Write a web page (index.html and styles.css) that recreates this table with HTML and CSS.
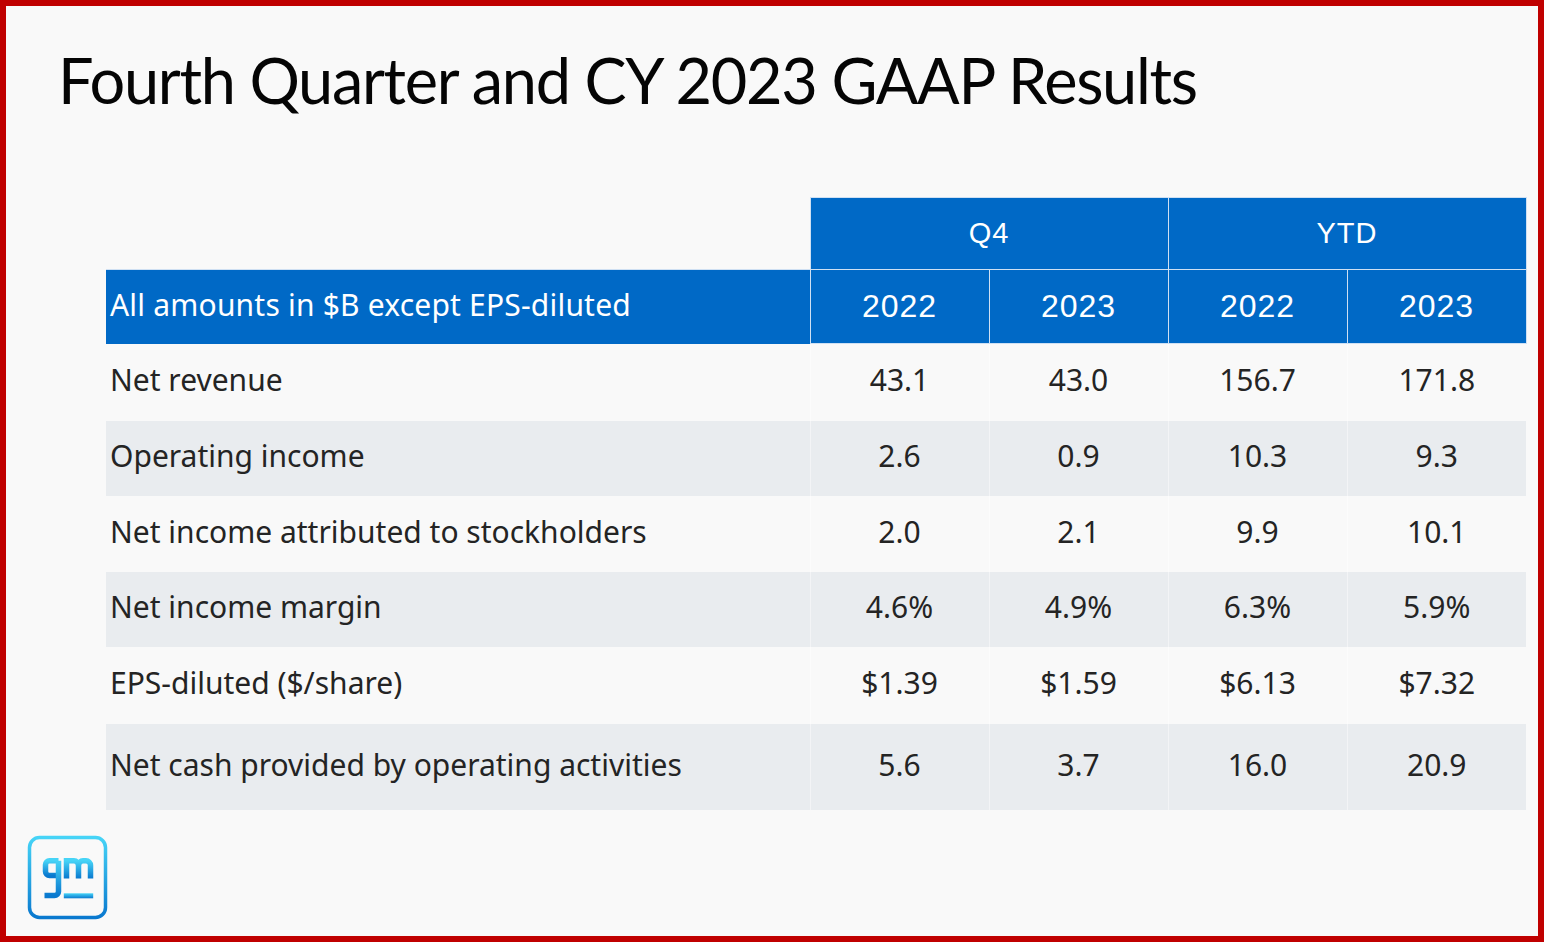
FILE: index.html
```html
<!DOCTYPE html>
<html>
<head>
<meta charset="utf-8">
<link rel="stylesheet" href="styles.css">
</head>
<body>
<div class="frame">
  <h1 class="title">Fourth Quarter and CY 2023 GAAP Results</h1>
  <table class="results">
    <colgroup>
      <col class="c-label"><col class="c-num"><col class="c-num"><col class="c-num"><col class="c-num">
    </colgroup>
    <thead>
      <tr class="hr1">
        <th class="blank"></th>
        <th class="group" colspan="2">Q4</th>
        <th class="group" colspan="2">YTD</th>
      </tr>
      <tr class="hr2">
        <th class="lab">All amounts in $B except EPS-diluted</th>
        <th class="yr">2022</th>
        <th class="yr">2023</th>
        <th class="yr">2022</th>
        <th class="yr">2023</th>
      </tr>
    </thead>
    <tbody>
      <tr class="r1"><td class="lab">Net revenue</td><td>43.1</td><td>43.0</td><td>156.7</td><td>171.8</td></tr>
      <tr class="r2 alt"><td class="lab">Operating income</td><td>2.6</td><td>0.9</td><td>10.3</td><td>9.3</td></tr>
      <tr class="r3"><td class="lab">Net income attributed to stockholders</td><td>2.0</td><td>2.1</td><td>9.9</td><td>10.1</td></tr>
      <tr class="r4 alt"><td class="lab">Net income margin</td><td>4.6%</td><td>4.9%</td><td>6.3%</td><td>5.9%</td></tr>
      <tr class="r5"><td class="lab">EPS-diluted ($/share)</td><td>$1.39</td><td>$1.59</td><td>$6.13</td><td>$7.32</td></tr>
      <tr class="r6 alt"><td class="lab">Net cash provided by operating activities</td><td>5.6</td><td>3.7</td><td>16.0</td><td>20.9</td></tr>
    </tbody>
  </table>
  <div class="logo">
    <svg width="81" height="85" viewBox="0 0 81 85">
      <defs>
        <linearGradient id="gmg" x1="0" y1="0" x2="0" y2="1">
          <stop offset="0" stop-color="#46d4f7"/>
          <stop offset="1" stop-color="#0a79cf"/>
        </linearGradient>
      </defs>
      <g fill="none" stroke="url(#gmg)" stroke-width="5.5">
        <rect x="2.5" y="2.5" width="76" height="80" rx="10" ry="10" stroke-width="3.5"/>
        <path d="M31.5 25.8 H22.5 A4 4 0 0 0 18.5 29.8 V36.5 A4 4 0 0 0 22.5 40.5 H31.5"/>
        <path d="M31.5 25.8 V56.5 A4 4 0 0 1 27.5 60.5 H17.5"/>
        <path d="M39.5 43.5 V25.8 H47 A4.5 4.5 0 0 1 51.5 30.3 V43.5"/>
        <path d="M51.5 30.3 A4.5 4.5 0 0 1 56 25.8 H59 A4.5 4.5 0 0 1 63.5 30.3 V43.5"/>
      </g>
      <rect x="36.8" y="58.3" width="29.4" height="5" fill="url(#gmg)"/>
    </svg>
  </div>
</div>
</body>
</html>
```

FILE: styles.css
```css
html, body {
  margin: 0;
  padding: 0;
}
body {
  width: 1544px;
  height: 942px;
  overflow: hidden;
}
.frame {
  box-sizing: border-box;
  width: 1544px;
  height: 942px;
  border: 6px solid #c00000;
  background: #f9f9f9;
  padding-top: 43px;
}
.title {
  margin: 0 0 86px 52px;
  font-family: "Lato", "Noto Sans", sans-serif;
  font-weight: 400;
  font-size: 63px;
  line-height: 62px;
  color: #050505;
  letter-spacing: -1.3px;
}
.results {
  margin-left: 100px;
  border-collapse: collapse;
  table-layout: fixed;
  width: 1420px;
  font-family: "Noto Sans", sans-serif;
  color: #242424;
}
.c-label { width: 704px; }
.c-num { width: 179px; }
.results th, .results td {
  padding: 0;
  text-align: center;
  vertical-align: middle;
}
.hr1 { height: 72px; }
.hr2 { height: 74px; }
.hr1 .blank {
  background: transparent;
  border-bottom: 1px solid #cfe0f3;
}
.group, .yr {
  background: #0069c6;
  color: #ffffff;
  font-family: "Liberation Sans", Arial, sans-serif;
  font-weight: 400;
  border: 1px solid #cfe0f3;
}
.group {
  font-size: 29px;
  letter-spacing: 1px;
}
.yr {
  font-size: 32px;
  letter-spacing: 1px;
}
.hr2 .lab {
  background: #0069c6;
  color: #ffffff;
  text-align: left;
  padding: 0 0 4px 4px;
  font-weight: 400;
  font-size: 30px;
  letter-spacing: 0.2px;
  border-right: 1px solid #cfe0f3;
}
.results td {
  font-size: 30px;
  padding-bottom: 5px;
  border-left: 1px solid rgba(255,255,255,0.45);
}
.results td.lab {
  text-align: left;
  padding-left: 4px;
  border-left: none;
}
.r1 { height: 77px; }
.r2 { height: 75px; }
.r3 { height: 76px; }
.r4 { height: 75px; }
.r5 { height: 77px; }
.r6 { height: 86px; }
.alt { background: #e9ecef; }
.logo {
  margin: 25px 0 0 21px;
  width: 81px;
  height: 85px;
}
.logo svg { display: block; }
```
